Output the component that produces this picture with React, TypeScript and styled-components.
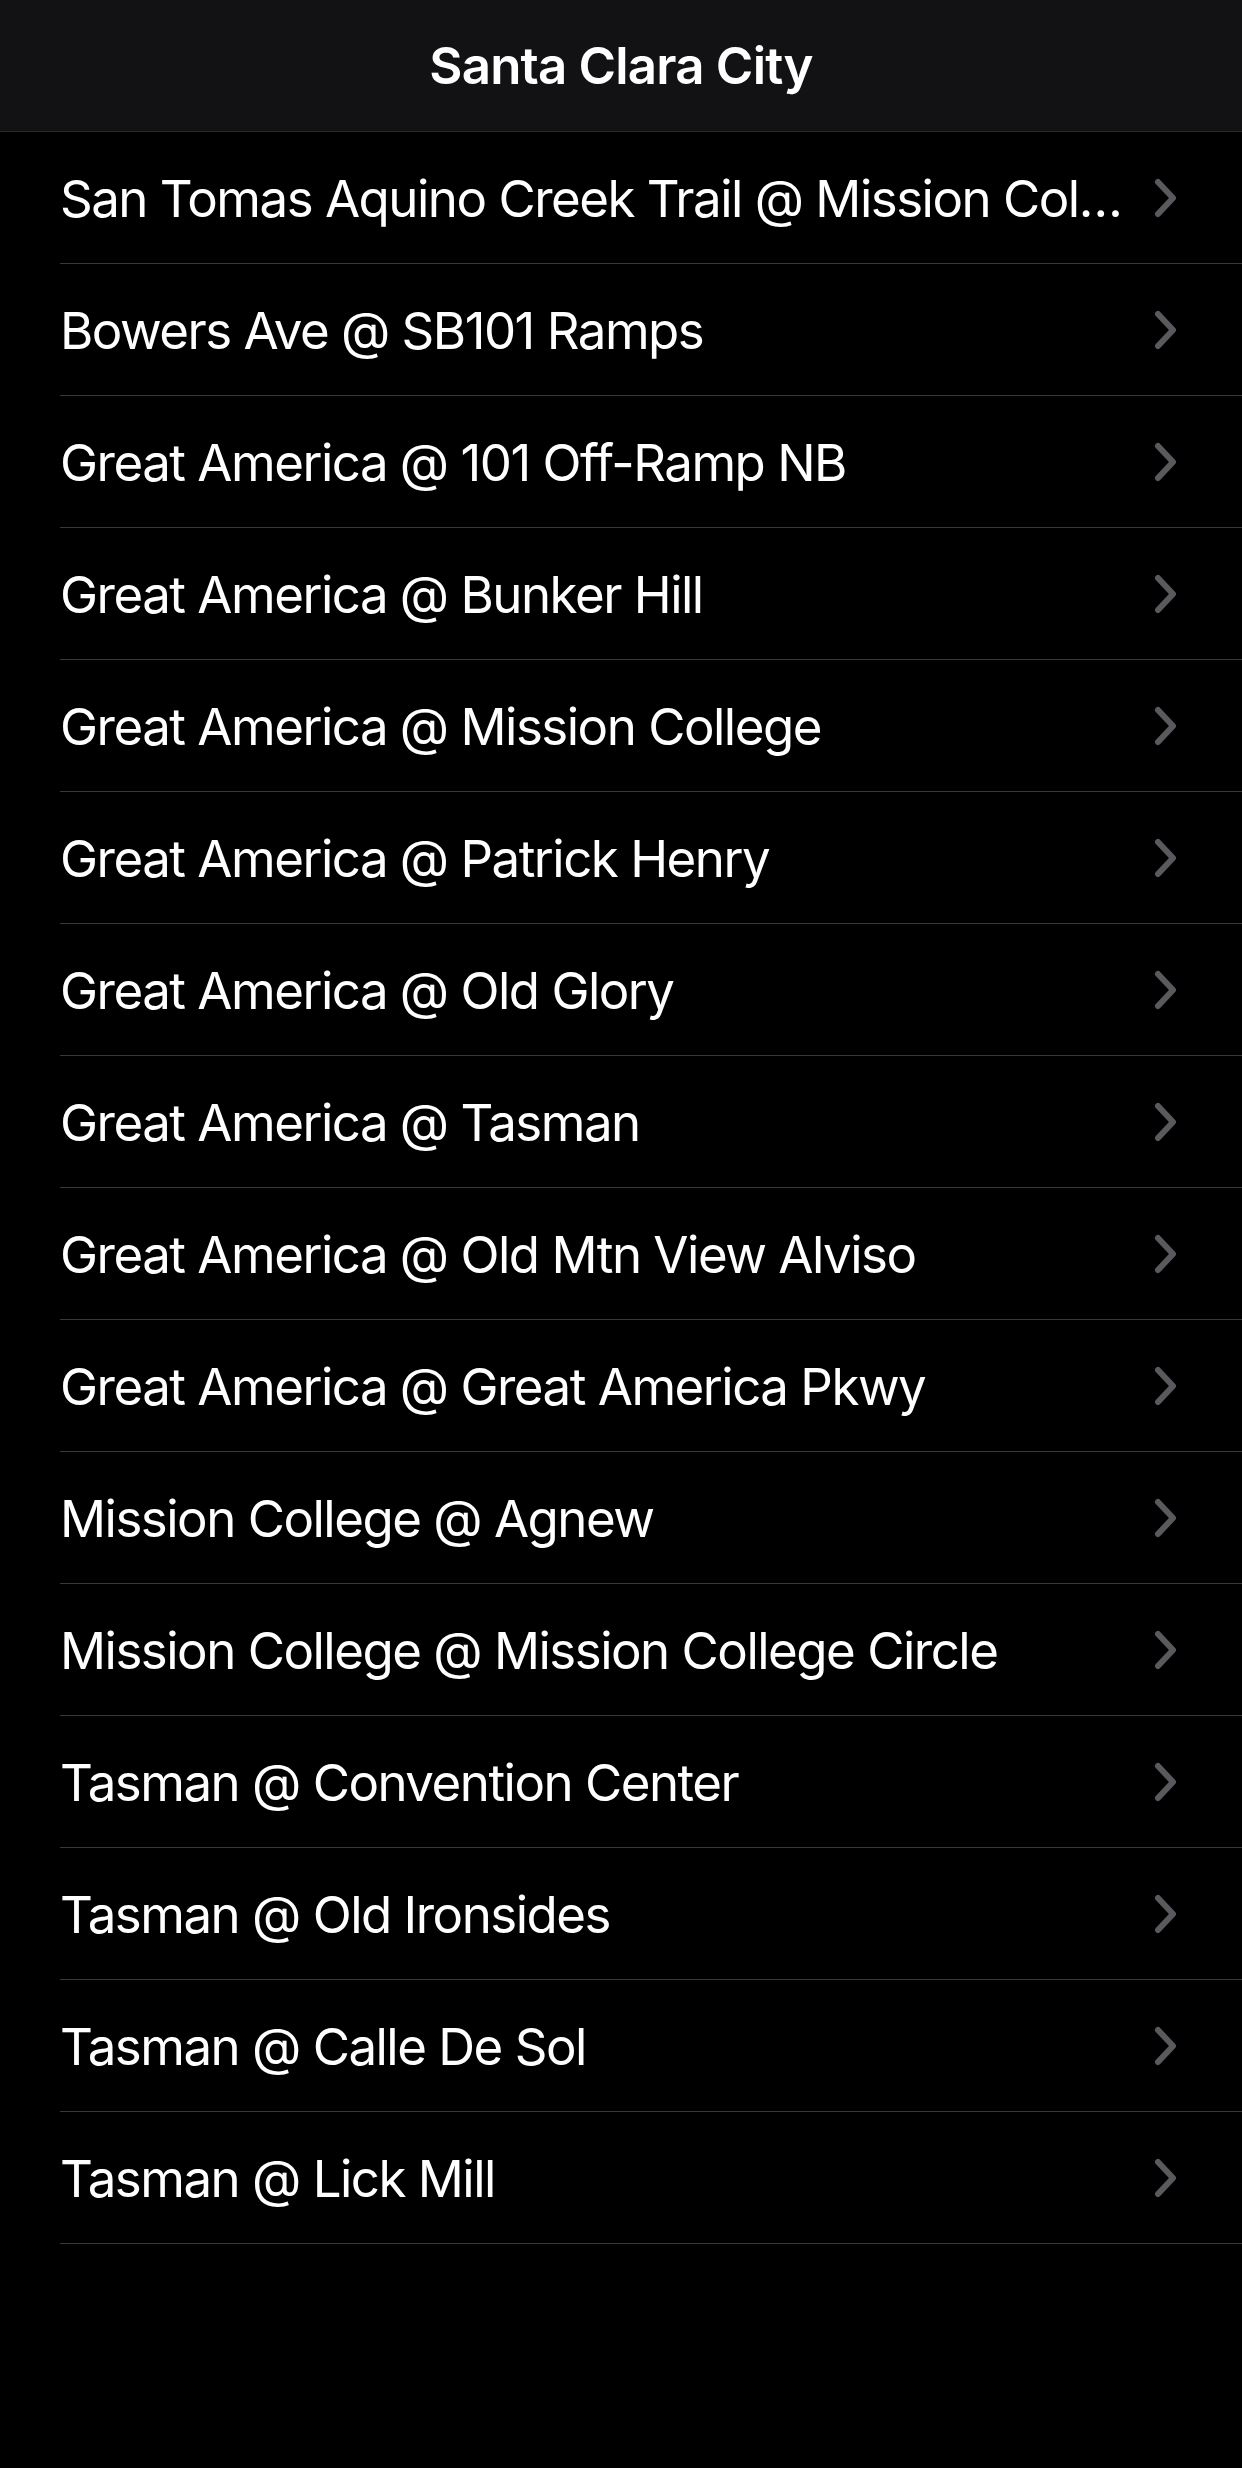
import * as React from "react";
import styled, { createGlobalStyle } from "styled-components";

const GlobalStyle = createGlobalStyle`
  html, body {
    margin: 0;
    padding: 0;
    background: #000;
  }
  body {
    font-family: Inter, "Noto Sans", "Liberation Sans", sans-serif;
    -webkit-font-smoothing: antialiased;
  }
`;

const stops: string[] = [
  "San Tomas Aquino Creek Trail @ Mission College",
  "Bowers Ave @ SB101 Ramps",
  "Great America @ 101 Off-Ramp NB",
  "Great America @ Bunker Hill",
  "Great America @ Mission College",
  "Great America @ Patrick Henry",
  "Great America @ Old Glory",
  "Great America @ Tasman",
  "Great America @ Old Mtn View Alviso",
  "Great America @ Great America Pkwy",
  "Mission College @ Agnew",
  "Mission College @ Mission College Circle",
  "Tasman @ Convention Center",
  "Tasman @ Old Ironsides",
  "Tasman @ Calle De Sol",
  "Tasman @ Lick Mill",
];

const Screen = styled.div`
  width: 1242px;
  min-height: 2468px;
  background: #000;
  color: #fff;
`;

const NavBar = styled.header`
  height: 132px;
  box-sizing: border-box;
  background: #121214;
  border-bottom: 1px solid #2a2a2c;
  display: flex;
  align-items: center;
  justify-content: center;
`;

const Title = styled.h1`
  margin: 0;
  font-size: 51px;
  font-weight: 600;
  letter-spacing: -0.8px;
  color: #fff;
`;

const List = styled.ul`
  list-style: none;
  margin: 0;
  padding: 0 0 0 60px;
`;

const Row = styled.li`
  height: 132px;
  box-sizing: border-box;
  border-bottom: 1px solid #38383a;
  display: flex;
  align-items: center;
  padding-right: 64px;
  gap: 26px;
`;

const Label = styled.span`
  flex: 1;
  min-width: 0;
  font-size: 51px;
  font-weight: 400;
  letter-spacing: -1.5px;
  white-space: nowrap;
  overflow: hidden;
  text-overflow: ellipsis;
  padding-top: 2px;
`;

const Chevron = () => (
  <svg width="24" height="40" viewBox="0 0 24 40" fill="none">
    <path
      d="M4 4 L19 20 L4 36"
      stroke="#5a5a5e"
      strokeWidth="6"
      strokeLinecap="round"
      strokeLinejoin="round"
    />
  </svg>
);

export default function App() {
  return (
    <Screen>
      <GlobalStyle />
      <NavBar>
        <Title>Santa Clara City</Title>
      </NavBar>
      <List>
        {stops.map((name, idx) => (
          <Row key={idx}>
            <Label>{name}</Label>
            <Chevron />
          </Row>
        ))}
      </List>
    </Screen>
  );
}
